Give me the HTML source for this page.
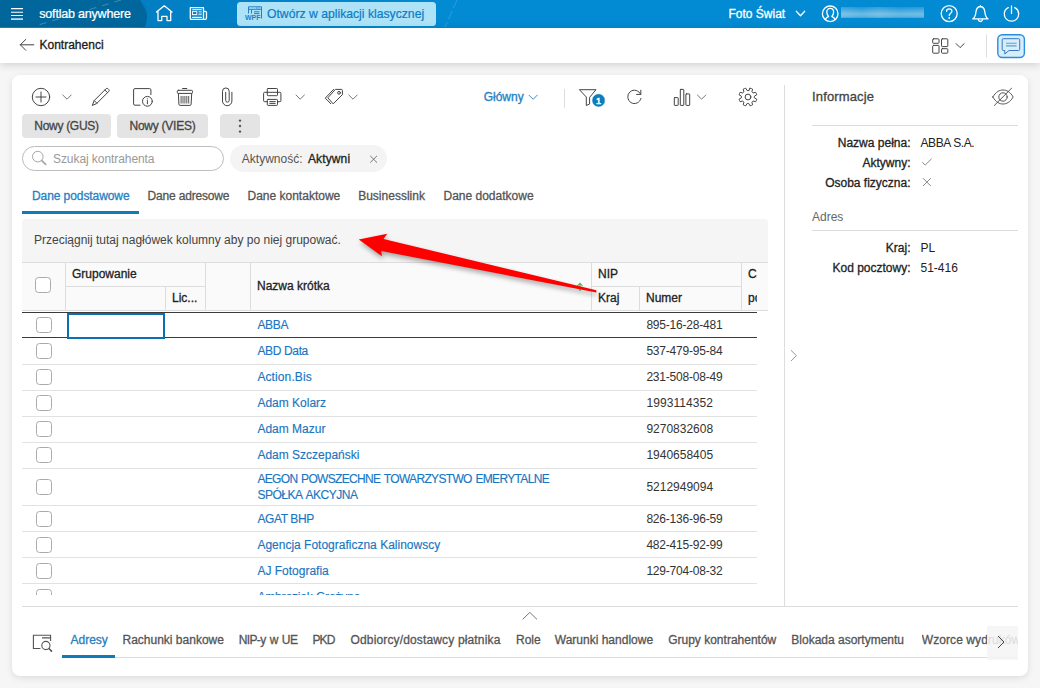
<!DOCTYPE html>
<html lang="pl">
<head>
<meta charset="utf-8">
<title>Kontrahenci</title>
<style>
*{box-sizing:border-box;margin:0;padding:0}
html,body{width:1040px;height:688px;overflow:hidden}
body{background:#f6f6f6;font-family:"Liberation Sans",sans-serif;font-size:12px;color:#333;position:relative}
.a{position:absolute;white-space:nowrap}
.t{position:absolute;white-space:nowrap;line-height:14px;height:14px}
.m{-webkit-text-stroke:0.3px currentColor}
svg{position:absolute;overflow:visible}
svg text{font-family:"Liberation Sans",sans-serif}
.ic{fill:none;stroke:#444;stroke-width:1;stroke-linecap:round;stroke-linejoin:round}
.icw{fill:none;stroke:#fff;stroke-width:1.3;stroke-linecap:round;stroke-linejoin:round}
#hdr{position:absolute;left:0;top:0;width:1040px;height:28px;background:#028ad2;overflow:hidden}
#bar{position:absolute;left:0;top:28px;width:1040px;height:35px;background:#fff;box-shadow:0 2px 8px rgba(0,0,0,.15)}
#card{position:absolute;left:12px;top:75px;width:1016px;height:601px;background:#fff;border-radius:8px;box-shadow:0 2px 7px rgba(0,0,0,.11)}
.btn{position:absolute;height:24px;background:#e4e4e4;border-radius:4px;color:#444;text-align:center;line-height:24px}
.hl{position:absolute;height:1px;background:#ddd}
.vl{position:absolute;width:1px;background:#ddd}
.cb{position:absolute;width:16px;height:16px;border:1.5px solid #aaa;border-radius:3.5px;background:#fff}
.lnk{color:#1976c2;-webkit-text-stroke:.15px currentColor}
.num{color:#333}
.tab{color:#555}
.hd{color:#222}
.lb{right:129.5px;color:#222}
</style>
</head>
<body>
<!--HDR-->
<div id="hdr">
<svg width="1040" height="28" style="left:0;top:0">
<defs><linearGradient id="hg" x1="0" x2="1" y1="0" y2="0"><stop offset="0" stop-color="#027fc3"/><stop offset=".3" stop-color="#0281c6"/><stop offset="1" stop-color="#028ad2"/></linearGradient></defs>
<rect x="140" y="0" width="300" height="28" fill="url(#hg)"/>
<path d="M0,0 H139.9 C144,6 147.3,11 147,16 C146.8,21 146,24 144.9,27 H0 Z" fill="#00669b"/>
<path d="M457,0 L445,27" stroke="#5fb4e3" stroke-width="0.8" stroke-dasharray="9 3" fill="none" opacity=".6"/>
<path d="M121,0 L35,26" stroke="#5f9fc4" stroke-width="0.9" stroke-dasharray="7 6" fill="none" opacity=".75"/>
<!-- hamburger -->
<path d="M11,8.6 H23 M11,12.3 H23 M11,15.55 H23" stroke="#fff" stroke-width="1.1" fill="none"/>
<path d="M11,19.1 H23" stroke="#fff" stroke-width="1.7" fill="none" opacity=".78"/>
<!-- home -->
<path class="icw" d="M156.5,12 L164.25,5.8 L172,12 M158,11 V20.6 H161.7 V16.3 H167 V20.6 H170.7 V11"/>
<!-- newspaper -->
<path class="icw" d="M190.3,7.7 H203.5 V19.4 H191.3 Q190.3,19.4 190.3,18.4 Z M203.5,11.4 H205.4 Q206.5,11.4 206.5,12.5 V18 Q206.5,19.4 205.1,19.4 H203" stroke-width="1.15"/>
<path d="M192.2,9.7 H201.8 M192.2,17.5 H201.8" stroke="#fff" stroke-width="1" fill="none"/>
<path d="M192.2,16.1 H201.8" stroke="#fff" stroke-width=".9" fill="none" opacity=".45"/>
<rect x="192.5" y="11.6" width="4.3" height="3" fill="none" stroke="#fff" stroke-width=".9"/>
<path d="M198.5,11.7 H201.8 M198.5,13.1 H201.8 M198.5,14.5 H201.8" stroke="#fff" stroke-width=".85" fill="none" opacity=".8"/>
<!-- user -->
<circle class="icw" cx="830.2" cy="13.8" r="7.8" stroke-width="1.1"/>
<path class="icw" stroke-width="1.2" d="M825.3,19.6 C825.8,17.6 827.4,17 828.6,16.4 C827.2,15 826.8,13.4 826.8,12 C826.8,9.8 828.2,8.4 830.2,8.4 C832.2,8.4 833.6,9.8 833.6,12 C833.6,13.4 833.2,15 831.8,16.4 C833,17 834.6,17.6 835.1,19.6"/>
<!-- chevron -->
<path class="icw" stroke-width="1.1" d="M796.3,11.3 L800.5,15.8 L804.7,11.3"/>
<!-- help -->
<circle class="icw" cx="949.2" cy="13.6" r="8" stroke-width="1.1"/>
<path class="icw" stroke-width="1.2" d="M946.6,11.3 C946.6,9.6 947.8,8.8 949.2,8.8 C950.7,8.8 951.9,9.7 951.9,11.2 C951.9,13.2 949.2,13.3 949.2,15.6"/>
<circle cx="949.2" cy="18" r="0.9" fill="#fff"/>
<!-- bell -->
<path class="icw" stroke-width="1.1" d="M972.8,18.9 C975.2,17.2 975.6,15.2 975.9,12.2 C976.2,8.9 977.9,6.7 980.4,6.5 C982.9,6.7 984.6,8.9 984.9,12.2 C985.2,15.2 985.6,17.2 988,18.9 Z M980.4,6.4 V5.7 M978.3,19.6 C978.6,21 979.4,21.5 980.4,21.5 C981.4,21.5 982.2,21 982.5,19.6"/>
<!-- power -->
<path class="icw" stroke-width="1.1" d="M1008.3,7.6 C1005.8,8.8 1004.3,11.2 1004.3,14 C1004.3,18 1007.5,21.2 1011.5,21.2 C1015.5,21.2 1018.7,18 1018.7,14 C1018.7,11.2 1017.2,8.8 1014.7,7.6 M1011.5,5.8 V13.4"/>
<defs><linearGradient id="bn" x1="0" x2="0" y1="0" y2="1"><stop offset="0" stop-color="#fff" stop-opacity=".10"/><stop offset=".65" stop-color="#fff" stop-opacity=".42"/><stop offset="1" stop-color="#fff" stop-opacity=".30"/></linearGradient><linearGradient id="bn2" x1="0" x2="1" y1="0" y2="0"><stop offset="0" stop-color="#fff" stop-opacity=".12"/><stop offset=".25" stop-color="#fff" stop-opacity="0"/><stop offset=".45" stop-color="#fff" stop-opacity=".1"/><stop offset=".7" stop-color="#fff" stop-opacity="0"/><stop offset="1" stop-color="#fff" stop-opacity=".05"/></linearGradient></defs>
<rect x="841" y="7" width="83" height="10.8" fill="url(#bn)"/><rect x="841" y="7" width="83" height="10.8" fill="url(#bn2)"/>
</svg>
<div class="t" style="left:39.3px;top:7px;color:#fff;font-size:12.6px;letter-spacing:-0.24px;-webkit-text-stroke:.22px #fff">softlab anywhere</div>
<div class="a" style="left:237px;top:2px;width:199px;height:24px;background:#aee2f6;border-radius:3.5px"></div>
<svg width="24" height="24" style="left:240px;top:2px">
<path d="M8.5,11.5 V4.8 H21.5 V16.5 M8.5,7.3 H21.5 M11.5,7.3 V11.5 M14,9.8 H19.5 M14,11.6 H19.5" fill="none" stroke="#1a82c9" stroke-width="1"/>
<path d="M16,6 H20" stroke="#1a82c9" stroke-width="0.8" stroke-dasharray="1 0.7" fill="none"/>
<text x="5" y="17.9" font-size="6.3" font-weight="700" fill="#1a82c9" textLength="15.5" lengthAdjust="spacingAndGlyphs">WPF</text>
</svg>
<div class="t" style="left:267px;top:7px;color:#0b7cc6;font-size:12.2px;-webkit-text-stroke:.2px #0b7cc6">Otwórz w aplikacji klasycznej</div>
<div class="t m" style="left:728.5px;top:7px;color:#fff">Foto Świat</div>
</div>
<!--/HDR-->
<!--BAR-->
<div id="bar"></div>
<svg width="1040" height="40" style="left:0;top:28px">
<path class="ic" stroke="#555" d="M33.8,16.8 H20.3 M25.8,11.4 L20.3,16.8 L25.8,22.3"/>
<!-- grid -->
<g class="ic" stroke="#555" stroke-width="1.1">
<rect x="932.7" y="10.8" width="6.3" height="4.5" rx=".8"/>
<rect x="932.7" y="17.4" width="6.3" height="7.8" rx=".8"/>
<rect x="941.5" y="10.8" width="6.3" height="7.8" rx=".8"/>
<rect x="941.5" y="20.7" width="6.3" height="4.5" rx=".8"/>
</g>
<path class="ic" stroke="#777" d="M956.1,15.6 L960.1,19.6 L964.2,15.6"/>
<path d="M986.5,6.5 V29.5" stroke="#ddd" stroke-width="1" fill="none"/>
<rect x="997.8" y="6.7" width="26.6" height="22.8" rx="4.5" fill="#d6edfa" stroke="#2a8fd6" stroke-width="1.4"/>
<path d="M1003.2,10.7 H1018.7 Q1019.7,10.7 1019.7,11.7 V21.5 Q1019.7,22.5 1018.7,22.5 H1009 L1004.8,26 V22.5 H1003.2 Q1002.2,22.5 1002.2,21.5 V11.7 Q1002.2,10.7 1003.2,10.7 Z" fill="none" stroke="#3a78c4" stroke-width="1" stroke-linejoin="round"/>
<path d="M1006,15.3 H1016.6 M1006,17.9 H1016.6" fill="none" stroke="#5a9fd4" stroke-width="1.1"/>
</svg>
<div class="t m" style="left:39.5px;top:38px;color:#1a1a1a">Kontrahenci</div>
<!--/BAR-->
<!--CARD-->
<div id="card"></div>
<!-- toolbar icons -->
<svg width="800" height="30" style="left:0;top:80px">
<g class="ic" transform="translate(0,-80)">
<circle cx="41" cy="97" r="8.7"/><path d="M36,97 H46 M41,92 V102"/>
<path stroke="#777" d="M62.8,95 L67,99.2 L71.2,95"/>
<!-- pencil -->
<path d="M92.4,105.1 L94.24,100.58 L106.2,88.6 Q107,87.8 107.8,88.6 L108.9,89.7 Q109.7,90.5 108.9,91.3 L96.92,103.26 Z M104.85,89.97 L107.53,92.65 M94.24,100.58 L96.92,103.26"/>
<!-- info doc -->
<path d="M140,105.2 H134.9 Q133.6,105.2 133.6,103.9 V89.9 Q133.6,88.6 134.9,88.6 H149.6 Q150.9,88.6 150.9,89.9 V94.6"/>
<circle cx="147.4" cy="101.3" r="4.9"/><path d="M147.4,100.6 V103.8"/><circle cx="147.4" cy="98.8" r="0.6" fill="#444" stroke="none"/>
<!-- trash -->
<path d="M182.6,88.5 H186.8"/>
<rect x="177.3" y="90.3" width="15.2" height="3.1" rx="1"/>
<path d="M178.4,93.6 L178.9,104.3 Q179,105.4 180.1,105.4 H189.9 Q191,105.4 191.1,104.3 L191.7,93.6"/>
<path d="M181.1,96 V103.5 M183,96 V103.5 M184.9,96 V103.5 M186.8,96 V103.5 M188.7,96 V103.5" stroke-width=".9" stroke-linecap="butt"/>
<!-- clip -->
<path d="M231.9,92.3 V101 A4.7,4.7 0 0 1 222.5,101 V91.3 A3.35,3.35 0 0 1 229.2,91.3 V100.4 A1.75,1.75 0 0 1 225.7,100.4 V92.3"/>
<!-- printer -->
<rect x="267.3" y="88.5" width="10.2" height="7.2" rx=".8"/>
<path d="M267.3,101.7 H264.6 Q263.6,101.7 263.6,100.7 V93.3 Q263.6,92.3 264.6,92.3 H279.9 Q280.9,92.3 280.9,93.3 V100.7 Q280.9,101.7 279.9,101.7 H277.5"/>
<rect x="267.3" y="99.4" width="10.2" height="6" rx="0.8"/>
<path d="M269.8,101.6 H275.2 M269.8,103.4 H275.2"/>
<path stroke="#777" d="M296,95 L300.2,99.2 L304.4,95"/>
<!-- tag -->
<path d="M335.8,89.4 H341.4 Q342.4,89.4 342.4,90.4 V94.6 L333.2,103.9 L328.1,98.1 Z M333.6,89.4 L325.3,98.1 L330.7,103.7"/>
<circle cx="339" cy="92.8" r="1.4"/>
<path stroke="#777" d="M348.8,95 L353,99.2 L357.2,95"/>
<!-- glowny chevron -->
<path stroke="#3c8cc8" d="M529,95.2 L533.1,99.3 L537.2,95.2"/>
<path stroke="#ddd" d="M564.5,89 V108" stroke-linecap="butt"/>
<!-- filter -->
<path d="M579.8,89.7 H596 L589.6,97.4 V104 L586.3,105.5 V97.4 Z"/>
<circle cx="598.6" cy="100.4" r="6.6" fill="#0c7cba" stroke="#fff" stroke-width="0.5"/>
<!-- refresh -->
<path d="M640.7,94.4 A6.7,6.7 0 1 0 641,98.4 M636.6,94.4 H640.8 V90.2"/>
<!-- bars -->
<rect x="674.3" y="97.6" width="3.9" height="7.8" rx=".5"/><rect x="680.3" y="89.4" width="3.5" height="16" rx=".5"/><rect x="685.9" y="93.9" width="3.8" height="11.5" rx=".5"/>
<path stroke="#777" d="M697.4,95 L701.6,99.2 L705.8,95"/>
<!-- gear placeholder -->
<path d="M750.10,88.17 A9.1,9.1 0 0 1 752.59,89.20 L751.90,91.88 A6.5,6.5 0 0 0 753.02,93.00 L755.70,92.31 A9.1,9.1 0 0 1 756.73,94.80 L754.35,96.21 A6.5,6.5 0 0 0 754.35,97.79 L756.73,99.20 A9.1,9.1 0 0 1 755.70,101.69 L753.02,101.00 A6.5,6.5 0 0 0 751.90,102.12 L752.59,104.80 A9.1,9.1 0 0 1 750.10,105.83 L748.69,103.45 A6.5,6.5 0 0 0 747.11,103.45 L745.70,105.83 A9.1,9.1 0 0 1 743.21,104.80 L743.90,102.12 A6.5,6.5 0 0 0 742.78,101.00 L740.10,101.69 A9.1,9.1 0 0 1 739.07,99.20 L741.45,97.79 A6.5,6.5 0 0 0 741.45,96.21 L739.07,94.80 A9.1,9.1 0 0 1 740.10,92.31 L742.78,93.00 A6.5,6.5 0 0 0 743.90,91.88 L743.21,89.20 A9.1,9.1 0 0 1 745.70,88.17 L747.11,90.55 A6.5,6.5 0 0 0 748.69,90.55 Z"/>
<circle cx="748" cy="97" r="2.9"/>
</g>
<text x="596.1" y="23.7" font-size="9.2" font-weight="400" fill="#fff" stroke="#fff" stroke-width=".55">1</text>
</svg>
<div class="t m" style="left:483.7px;top:90px;color:#2680c2">Główny</div>
<!-- buttons -->
<div class="btn m" style="left:22px;top:114px;width:89px;letter-spacing:-.3px">Nowy (GUS)</div>
<div class="btn m" style="left:117px;top:114px;width:91px;letter-spacing:-.25px">Nowy (VIES)</div>
<div class="btn" style="left:220px;top:114px;width:40px"></div>
<svg width="6" height="16" style="left:237px;top:118px"><circle cx="3" cy="2.6" r="1.2" fill="#555"/><circle cx="3" cy="8" r="1.2" fill="#555"/><circle cx="3" cy="13.6" r="1.2" fill="#555"/></svg>
<!-- search -->
<div class="a" style="left:22px;top:146px;width:202px;height:25px;border:1px solid #bdbdbd;border-radius:13px;background:#fff"></div>
<svg width="16" height="16" style="left:32px;top:150px"><circle cx="5.8" cy="6.6" r="5.3" fill="none" stroke="#a6a6a6" stroke-width="1"/><path d="M9.8,10.6 L13.6,14.4" stroke="#a6a6a6" stroke-width="1.7" fill="none" stroke-linecap="round"/></svg>
<div class="t" style="left:53px;top:152px;color:#999;letter-spacing:-.07px">Szukaj kontrahenta</div>
<!-- chip -->
<div class="a" style="left:230px;top:145px;width:157px;height:27px;border-radius:13.5px;background:#f4f4f4"></div>
<div class="t" style="left:241.8px;top:152px;color:#555">Aktywność:</div>
<div class="t m" style="left:308px;top:152px;color:#222;letter-spacing:.12px">Aktywni</div>
<svg width="10" height="10" style="left:369px;top:154px"><path d="M1.2,1.8 L8,8.6 M8,1.8 L1.2,8.6" stroke="#777" stroke-width="1" fill="none"/></svg>
<!-- tabs -->
<div class="t m" style="left:32px;top:189px;color:#2680c2;letter-spacing:-.08px">Dane podstawowe</div>
<div class="t m tab" style="left:147.5px;top:189px;letter-spacing:-.17px">Dane adresowe</div>
<div class="t m tab" style="left:247.5px;top:189px">Dane kontaktowe</div>
<div class="t m tab" style="left:358.2px;top:189px">Businesslink</div>
<div class="t m tab" style="left:443.5px;top:189px">Dane dodatkowe</div>
<div class="a" style="left:22px;top:211px;width:117px;height:3px;background:#0c7cba"></div>
<!-- group panel -->
<div class="a" style="left:22px;top:219px;width:746px;height:43px;background:#f5f5f5;border-radius:3px 3px 0 0"></div>
<div class="t" style="left:34px;top:233px;color:#444">Przeciągnij tutaj nagłówek kolumny aby po niej grupować.</div>
<!-- grid header -->
<div class="a" style="left:22px;top:262px;width:746px;height:48.5px;background:#fafafa"></div>
<div class="hl" style="left:22px;top:262px;width:746px"></div>
<div class="vl" style="left:65px;top:262px;height:49px"></div>
<div class="vl" style="left:165px;top:286px;height:25px"></div>
<div class="vl" style="left:205px;top:262px;height:49px"></div>
<div class="vl" style="left:250px;top:262px;height:49px"></div>
<div class="vl" style="left:591px;top:262px;height:49px"></div>
<div class="vl" style="left:639px;top:286px;height:25px"></div>
<div class="vl" style="left:741px;top:262px;height:49px"></div>
<div class="hl" style="left:65px;top:286px;width:140px"></div>
<div class="hl" style="left:591px;top:286px;width:150px"></div>
<div class="hl" style="left:22px;top:310px;width:746px"></div>
<div class="cb" style="left:35px;top:277px"></div>
<div class="t m hd" style="left:72px;top:267px">Grupowanie</div>
<div class="t m hd" style="left:172px;top:291px">Lic...</div>
<div class="t m hd" style="left:257px;top:279px">Nazwa krótka</div>
<div class="t m hd" style="left:598px;top:267px">NIP</div>
<div class="t m hd" style="left:598px;top:291px">Kraj</div>
<div class="t m hd" style="left:646px;top:291px">Numer</div>
<div class="t m hd" style="left:748px;top:267px;width:9px;overflow:hidden">Cz</div>
<div class="t m hd" style="left:748px;top:291px;width:9px;overflow:hidden">po</div>
<!-- rows -->
<div class="a" style="left:22px;top:311px;width:735px;height:284px;overflow:hidden">
<div class="cb" style="left:13.5px;top:6px"></div>
<div class="t lnk" style="left:235.4px;top:7px;letter-spacing:-0.33px">ABBA</div>
<div class="t num" style="left:624.4px;top:7px;letter-spacing:-.21px">895-16-28-481</div>
<div class="cb" style="left:13.5px;top:32px"></div>
<div class="t lnk" style="left:235.4px;top:33px;letter-spacing:-0.35px">ABD Data</div>
<div class="t num" style="left:624.4px;top:33px;letter-spacing:-.21px">537-479-95-84</div>
<div class="cb" style="left:13.5px;top:58px"></div>
<div class="t lnk" style="left:235.4px;top:59px;letter-spacing:0.11px">Action.Bis</div>
<div class="t num" style="left:624.4px;top:59px;letter-spacing:-.21px">231-508-08-49</div>
<div class="cb" style="left:13.5px;top:84px"></div>
<div class="t lnk" style="left:235.4px;top:85px">Adam Kolarz</div>
<div class="t num" style="left:624.4px;top:85px;letter-spacing:.09px">1993114352</div>
<div class="cb" style="left:13.5px;top:110px"></div>
<div class="t lnk" style="left:235.4px;top:111px">Adam Mazur</div>
<div class="t num" style="left:624.4px;top:111px">9270832608</div>
<div class="cb" style="left:13.5px;top:136px"></div>
<div class="t lnk" style="left:235.4px;top:137px">Adam Szczepański</div>
<div class="t num" style="left:624.4px;top:137px">1940658405</div>
<div class="cb" style="left:13.5px;top:168px"></div>
<div class="t lnk" style="left:235.4px;top:161px;letter-spacing:-.67px;word-spacing:1.0px">AEGON POWSZECHNE TOWARZYSTWO EMERYTALNE</div>
<div class="t lnk" style="left:235.4px;top:177px;letter-spacing:-.47px;word-spacing:1.4px">SPÓŁKA AKCYJNA</div>
<div class="t num" style="left:624.4px;top:169px">5212949094</div>
<div class="cb" style="left:13.5px;top:200px"></div>
<div class="t lnk" style="left:235.4px;top:201px;letter-spacing:-0.4px">AGAT BHP</div>
<div class="t num" style="left:624.4px;top:201px;letter-spacing:-.21px">826-136-96-59</div>
<div class="cb" style="left:13.5px;top:226px"></div>
<div class="t lnk" style="left:235.4px;top:227px">Agencja Fotograficzna Kalinowscy</div>
<div class="t num" style="left:624.4px;top:227px;letter-spacing:-.21px">482-415-92-99</div>
<div class="cb" style="left:13.5px;top:252px"></div>
<div class="t lnk" style="left:235.4px;top:253px">AJ Fotografia</div>
<div class="t num" style="left:624.4px;top:253px;letter-spacing:-.21px">129-704-08-32</div>
<div class="cb" style="left:13.5px;top:278px"></div>
<div class="t lnk" style="left:235.4px;top:279px;letter-spacing:-0.15px">Ambroziak Grażyna</div>
<div class="hl" style="left:0;top:1px;width:735px;background:#3a3a3a"></div>
<div class="hl" style="left:0;top:26px;width:735px;background:#3a3a3a"></div>
<div class="hl" style="left:0;top:53px;width:735px;background:#e2e2e2"></div>
<div class="hl" style="left:0;top:79px;width:735px;background:#e2e2e2"></div>
<div class="hl" style="left:0;top:105px;width:735px;background:#e2e2e2"></div>
<div class="hl" style="left:0;top:131px;width:735px;background:#e2e2e2"></div>
<div class="hl" style="left:0;top:157px;width:735px;background:#e2e2e2"></div>
<div class="hl" style="left:0;top:194px;width:735px;background:#e2e2e2"></div>
<div class="hl" style="left:0;top:220px;width:735px;background:#e2e2e2"></div>
<div class="hl" style="left:0;top:246px;width:735px;background:#e2e2e2"></div>
<div class="hl" style="left:0;top:272px;width:735px;background:#e2e2e2"></div>
<div class="a" style="left:45px;top:2px;width:98px;height:25.5px;border:2px solid #0c6fb3;background:#fff"></div>
</div>
<!-- splitter -->
<div class="vl" style="left:784px;top:85px;height:521px"></div>
<svg width="10" height="14" style="left:789px;top:349px"><path d="M2,1.3 L7.4,6.6 L2,12" fill="none" stroke="#999" stroke-width="1"/></svg>
<!-- info panel -->
<div class="t m" style="left:812px;top:90px;font-size:13px;color:#444;letter-spacing:.15px">Informacje</div>
<svg width="24" height="22" style="left:991px;top:86px"><g fill="none" stroke="#555" stroke-width="1" stroke-linecap="round"><path d="M1.8,11 C5,5.6 8.6,4 12,4 C15.4,4 19,5.6 22.2,11 C19,16.4 15.4,18 12,18 C8.6,18 5,16.4 1.8,11 Z"/><circle cx="12" cy="11" r="4.2"/><path d="M3.4,19.4 L20.6,2.2"/></g></svg>
<div class="hl" style="left:812px;top:125px;width:206px"></div>
<div class="t m lb" style="top:136px">Nazwa pełna:</div>
<div class="t" style="left:920.5px;top:136px;color:#222;letter-spacing:-.4px">ABBA S.A.</div>
<div class="t m lb" style="top:156px">Aktywny:</div>
<svg width="12" height="10" style="left:921px;top:157px"><path d="M1.2,5.2 L4.2,8 L10.6,1.8" fill="none" stroke="#888" stroke-width="1"/></svg>
<div class="t m lb" style="top:176px">Osoba fizyczna:</div>
<svg width="10" height="10" style="left:922px;top:177px"><path d="M1,1.2 L8.8,9 M8.8,1.2 L1,9" fill="none" stroke="#888" stroke-width="1"/></svg>
<div class="t" style="left:812px;top:209.6px;color:#666">Adres</div>
<div class="hl" style="left:812px;top:230px;width:206px"></div>
<div class="t m lb" style="top:241px">Kraj:</div>
<div class="t" style="left:920.5px;top:241px;color:#222">PL</div>
<div class="t m lb" style="top:261px">Kod pocztowy:</div>
<div class="t" style="left:920.5px;top:261px;color:#222">51-416</div>
<!-- bottom -->
<div class="hl" style="left:22px;top:606px;width:996px"></div>
<svg width="18" height="10" style="left:521px;top:611px"><path d="M1.6,8.4 L8.8,1.4 L16,8.4" fill="none" stroke="#777" stroke-width="1"/></svg>
<svg width="22" height="20" style="left:32px;top:634px"><g fill="none" stroke="#555" stroke-width="1.1"><path d="M8.4,14.5 H1.4 V1.3 H18.6 V7 M10,3.9 H18.6"/><circle cx="13.9" cy="11.5" r="4.1"/><path d="M16.9,14.5 L19.5,17.1" stroke-width="1.5" stroke-linecap="round"/></g></svg>
<div class="t m" style="left:70.5px;top:633px;color:#2680c2">Adresy</div>
<div class="t m tab" style="left:122.5px;top:633px">Rachunki bankowe</div>
<div class="t m tab" style="left:238.7px;top:633px;letter-spacing:-.62px;word-spacing:1.4px">NIP-y w UE</div>
<div class="t m tab" style="left:312.5px;top:633px;letter-spacing:-.9px">PKD</div>
<div class="t m tab" style="left:350.5px;top:633px;letter-spacing:.15px">Odbiorcy/dostawcy płatnika</div>
<div class="t m tab" style="left:516px;top:633px">Role</div>
<div class="t m tab" style="left:554.8px;top:633px">Warunki handlowe</div>
<div class="t m tab" style="left:668.2px;top:633px">Grupy kontrahentów</div>
<div class="t m tab" style="left:791.3px;top:633px">Blokada asortymentu</div>
<div class="t m tab" style="left:921.8px;top:633px;letter-spacing:.08px;width:96.2px;overflow:hidden">Wzorce wydruków</div>
<div class="hl" style="left:62px;top:657px;width:956px"></div>
<div class="a" style="left:62px;top:655px;width:53px;height:3px;background:#0c7cba"></div>
<div class="a" style="left:987px;top:626px;width:31px;height:33.5px;background:rgba(245,245,245,.86)"></div>
<svg width="10" height="16" style="left:996px;top:635px"><path d="M2,1 L8,7 L2,13" fill="none" stroke="#444" stroke-width="1"/></svg>
<!-- red arrow -->
<svg width="260" height="70" style="left:350px;top:228px">
<defs><filter id="sh" x="-10%" y="-30%" width="120%" height="180%"><feGaussianBlur stdDeviation="2.4"/></filter></defs>
<path d="M230,55.2 V63 M227.4,58 L230,55.2 L232.6,58" fill="none" stroke="#4caf50" stroke-width="1.1"/><polygon points="8.75,11.40 37.25,5.75 33.50,11.00 246.30,62.20 246.40,64.40 31.25,23.00 31.90,28.25" fill="#000" opacity=".33" filter="url(#sh)" transform="translate(1,3)"/><polygon points="8.75,11.40 37.25,5.75 33.50,11.00 246.30,62.20 246.40,64.40 31.25,23.00 31.90,28.25" fill="#fe0000"/>
</svg>
<!--/CARD-->
</body>
</html>
